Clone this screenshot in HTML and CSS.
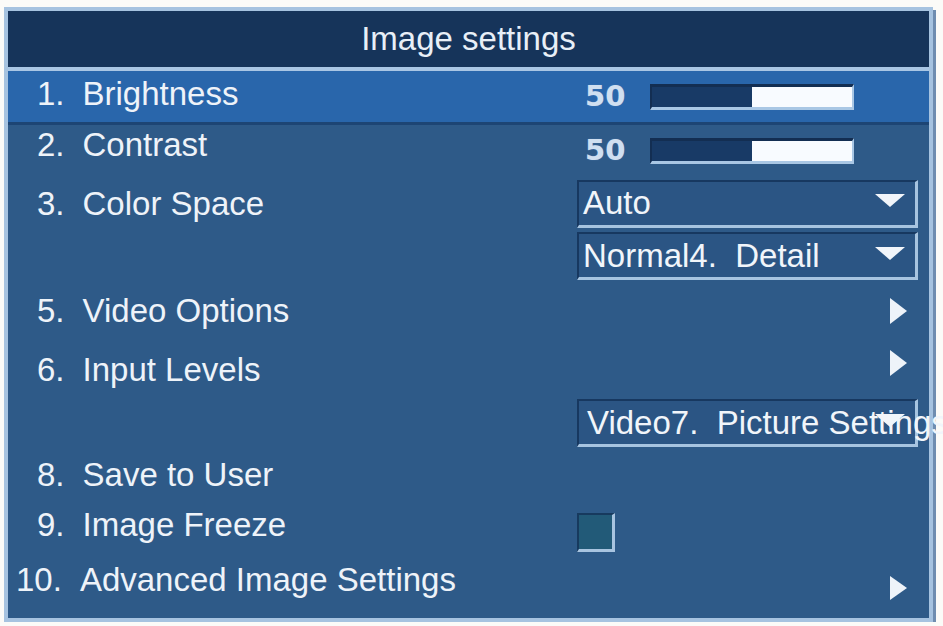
FILE: index.html
```html
<!DOCTYPE html>
<html>
<head>
<meta charset="utf-8">
<title>Image settings</title>
<link rel="stylesheet" href="styles.css">
</head>
<body>
<div class="osd">
  <div class="osd-title">Image settings</div>
  <div class="osd-body">
    <div class="row row--active row--r1">
      <div class="label label--up2"><span class="num">1.</span><span>Brightness</span></div>
      <div class="slider">
        <span class="val">50</span>
        <span class="bar"><span class="bar-fill" style="width:50%"></span></span>
      </div>
    </div>
    <div class="row row--r2">
      <div class="label label--up6"><span class="num">2.</span><span>Contrast</span></div>
      <div class="slider">
        <span class="val">50</span>
        <span class="bar"><span class="bar-fill" style="width:50%"></span></span>
      </div>
    </div>
    <div class="row row--r3">
      <div class="label"><span class="num">3.</span><span>Color Space</span></div>
      <div class="dropdown">
        <span class="dd-text">Auto</span>
        <svg class="dd-arrow" width="30" height="13" viewBox="0 0 30 13"><polygon points="0,0 30,0 15,13" fill="#f1f5fa"/></svg>
      </div>
    </div>
    <div class="row row--d2">
      <div class="label"></div>
      <div class="dropdown">
        <span class="dd-text">Normal4.&nbsp; Detail</span>
        <svg class="dd-arrow" width="30" height="13" viewBox="0 0 30 13"><polygon points="0,0 30,0 15,13" fill="#f1f5fa"/></svg>
      </div>
    </div>
    <div class="row row--r5">
      <div class="label"><span class="num">5.</span><span>Video Options</span></div>
      <svg class="sub-arrow" width="17" height="26" viewBox="0 0 17 26"><polygon points="0,0 17,13 0,26" fill="#eef3f9"/></svg>
    </div>
    <div class="row row--r6">
      <div class="label label--down2"><span class="num">6.</span><span>Input Levels</span></div>
      <svg class="sub-arrow sub-arrow--up" width="17" height="26" viewBox="0 0 17 26"><polygon points="0,0 17,13 0,26" fill="#eef3f9"/></svg>
    </div>
    <div class="row row--d3">
      <div class="label"></div>
      <div class="dropdown">
        <span class="dd-text dd-text--wide">Video7.&nbsp; Picture Settings</span>
        <svg class="dd-arrow" width="30" height="13" viewBox="0 0 30 13"><polygon points="0,0 30,0 15,13" fill="#f1f5fa"/></svg>
      </div>
    </div>
    <div class="row row--r8">
      <div class="label"><span class="num">8.</span><span>Save to User</span></div>
    </div>
    <div class="row row--r9">
      <div class="label label--up3"><span class="num">9.</span><span>Image Freeze</span></div>
      <span class="checkbox"></span>
    </div>
    <div class="row row--r10">
      <div class="label label--wide label--up4"><span class="num">10.</span><span>Advanced Image Settings</span></div>
      <svg class="sub-arrow sub-arrow--down" width="17" height="24" viewBox="0 0 17 24"><polygon points="0,0 17,12 0,24" fill="#eef3f9"/></svg>
    </div>
  </div>
</div>
</body>
</html>
```

FILE: styles.css
```css
html, body {
  margin: 0;
  padding: 0;
  background: #fbfbf8;
  overflow: hidden;
}

body {
  font-family: "Liberation Sans", Arial, sans-serif;
  color: #eef3f9;
}

.osd {
  margin: 7px 0 0 4px;
  width: 921px;
  border: 4px solid #a6c3e0;
  box-shadow: 3px 3px 0 #6f8db0;
  background: #2e5a88;
}

.osd-title {
  height: 56px;
  display: flex;
  align-items: center;
  justify-content: center;
  background: #16345a;
  border-bottom: 4px solid #a9c6e4;
  font-size: 33px;
  color: #e8eff7;
}

.osd-body {
  padding-bottom: 6px;
}

.row {
  display: grid;
  grid-template-columns: 569px 1fr;
  align-items: center;
}

.row--active {
  background: #2966ab;
  border-bottom: 3px solid #1d4574;
}

.row--r1 { height: 51px; }
.row--r2 { height: 52px; }
.row--r3 { height: 53px; }
.row--d2 { height: 52px; }
.row--r5 { height: 58px; }
.row--r6 { height: 56px; }
.row--d3 { height: 54px; }
.row--r8 { height: 50px; }
.row--r9 { height: 56px; }
.row--r10 { height: 56px; }

.label {
  padding-left: 29px;
  font-size: 33px;
  line-height: 38px;
  white-space: nowrap;
}

.label--wide { padding-left: 8px; }
.label--up2 { padding-bottom: 5px; }
.label--up3 { padding-bottom: 6px; }
.label--up4 { padding-bottom: 8px; }
.label--up6 { padding-bottom: 12px; }
.label--down2 { padding-top: 4px; }

.num {
  display: inline-block;
  margin-right: 18px;
}

/* slider */
.slider {
  display: flex;
  align-items: center;
}

.val {
  display: inline-block;
  width: 65px;
  margin-left: 8px;
  padding-bottom: 2px;
  font-family: "DejaVu Sans", Verdana, sans-serif;
  font-weight: bold;
  font-size: 29px;
  line-height: 30px;
  color: #d0dff0;
  text-shadow: 0 0 1px #6a92c0;
}

.bar {
  display: flex;
  width: 200px;
  height: 20px;
  border-top: 3px solid #132e52;
  border-left: 2px solid #132e52;
  border-bottom: 3px solid #a9c7e5;
  border-right: 2px solid #a9c7e5;
  background: #f8fbff;
}

.bar-fill {
  display: block;
  height: 100%;
  background: #183a66;
}

/* dropdown */
.dropdown {
  display: flex;
  align-items: center;
  width: 336px;
  height: 43px;
  border-top: 2px solid #173860;
  border-left: 2px solid #173860;
  border-bottom: 3px solid #a7c4e0;
  border-right: 3px solid #a7c4e0;
  background: #2b5584;
}

.dd-text {
  flex: 1 1 0;
  min-width: 0;
  padding-left: 4px;
  font-size: 33px;
  line-height: 38px;
  white-space: nowrap;
  color: #f1f5fa;
}

.dd-text--wide { padding-left: 8px; }

.dd-arrow {
  flex: none;
  margin-right: 10px;
  margin-bottom: 5px;
}

/* submenu arrow */
.sub-arrow {
  justify-self: end;
  margin-right: 22px;
}

.sub-arrow--up { margin-bottom: 10px; }
.sub-arrow--down { margin-top: 8px; }

/* checkbox */
.checkbox {
  display: block;
  width: 33px;
  height: 34px;
  border-top: 2px solid #173a5e;
  border-left: 2px solid #173a5e;
  border-bottom: 3px solid #a8c4e0;
  border-right: 3px solid #a8c4e0;
  background: #225a78;
  margin-top: 9px;
}
```
